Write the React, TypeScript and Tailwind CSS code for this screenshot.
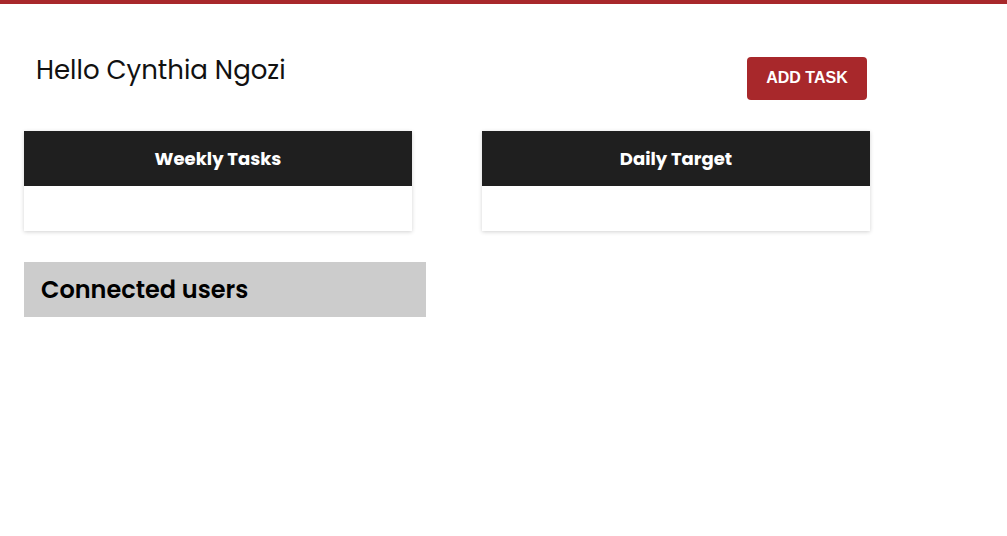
export default function App() {
  const font = { fontFamily: "Poppins, 'Open Sans', 'Noto Sans', sans-serif" };
  return (
    <div className="min-h-[536px] w-[1007px] bg-white" style={font}>
      <div className="h-[4px] bg-[#a8282b]" />
      <div className="pl-[24px]">
        <div className="flex items-start justify-between w-[843px] pt-[48px]">
          <h1 className="pl-[12px] text-[26px] leading-[36px] text-[#111] font-normal">Hello Cynthia Ngozi</h1>
          <button
            className="mt-[5px] h-[43px] w-[120px] rounded-[4px] bg-[#a8282b] text-white text-[16px] font-bold pb-[2px]"
            style={{ fontFamily: "'Liberation Sans', Arial, sans-serif" }}
          >
            ADD TASK
          </button>
        </div>
        <div className="mt-[31px] flex gap-[70px]">
          {["Weekly Tasks", "Daily Target"].map((t) => (
            <div key={t} className="w-[388px] bg-white shadow-[0_1px_4px_rgba(0,0,0,0.18)]">
              <div className="h-[55px] bg-[#1f1f1f] flex items-center justify-center text-white text-[18px] font-bold">
                {t}
              </div>
              <div className="h-[45px]" />
            </div>
          ))}
        </div>
        <div className="mt-[31px] w-[402px] h-[55px] bg-[#cccccc] flex items-center pl-[17px]">
          <span className="text-[24px] font-semibold text-black">Connected users</span>
        </div>
      </div>
    </div>
  );
}
